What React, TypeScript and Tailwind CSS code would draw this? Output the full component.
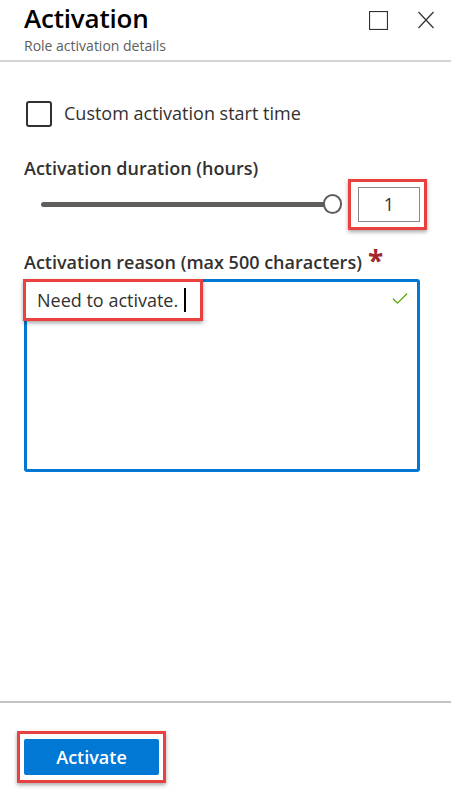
import { Check } from 'lucide-react';

const font = { fontFamily: '"Open Sans", "Noto Sans", sans-serif' };

export default function App() {
  return (
    <div className="w-[451px] h-[793px] bg-white flex flex-col text-[#323130] font-['Open_Sans',sans-serif]">
      {/* Header */}
      <div className="flex justify-between pl-6 pr-2 pt-[1px] h-[62px] border-b-2 border-[#d4d4d4]">
        <div>
          <h1 className="text-[26px] font-semibold leading-[34px] text-black tracking-[-0.2px]">Activation</h1>
          <p className="text-[14px] leading-[18px] text-[#605e5c] mt-[2px]">Role activation details</p>
        </div>
        <div className="flex items-start gap-[30px] pt-[10px] pr-[9px]">
          <svg width="19" height="19" viewBox="0 0 19 19">
            <rect x="0.5" y="0.5" width="18" height="18" fill="none" stroke="#323130" strokeWidth="1.2" />
          </svg>
          <svg width="16" height="18" viewBox="0 0 16 18">
            <path d="M0.5 1 L15.5 17 M15.5 1 L0.5 17" stroke="#323130" strokeWidth="1.2" fill="none" />
          </svg>
        </div>
      </div>

      {/* Body */}
      <div className="flex-1 px-6 pt-[38px]">
        <label className="flex items-center gap-[12px] ml-[2px]">
          <span className="w-[26px] h-[26px] rounded-[3px] border-2 border-[#323130] bg-white" />
          <span className="text-[18px] text-[#323130]">Custom activation start time</span>
        </label>

        <div className="mt-[28px] text-[18px] font-semibold text-[#323130]">Activation duration (hours)</div>
        <div className="flex items-center h-[52px] -mt-[4px]">
          <div className="ml-[17px] w-[301px] h-[5px] rounded-full bg-[#5f5e5d]" />
          <div className="-ml-[3px] w-[20px] h-[20px] rounded-full border-2 border-[#5f5e5d] bg-white" />
          <div className="ml-[6px] border-[3px] border-[#e8413f] shadow-[0_2px_4px_rgba(0,0,0,0.35)] pl-[7px] pr-[4px] py-[5px]">
            <div className="w-[62px] h-[35px] border border-[#8a8886] flex items-center justify-center text-[18px]">1</div>
          </div>
        </div>

        <div className="mt-[19px] flex items-start">
          <span className="text-[18px] font-semibold text-[#323130] leading-[26px]">Activation reason (max 500 characters)</span>
          <span className="ml-[6px] text-[28px] leading-[22px] text-[#a4262c] font-bold">*</span>
        </div>
        <div className="relative mt-[4px] h-[193px] w-[396px] border-[3px] border-[#0078d4] rounded-[3px]">
          <div className="absolute -left-[4px] -top-[3px] w-[180px] h-[42px] border-[3px] border-[#e8413f] shadow-[0_2px_4px_rgba(0,0,0,0.35)] bg-white flex items-center pl-[11px]">
            <span className="text-[18px] text-[#323130]">Need to activate.</span>
            <span className="ml-[6px] w-[2px] h-[24px] bg-black" />
          </div>
          <Check size={20} strokeWidth={1.5} className="absolute right-[7px] top-[7px] text-[#57a300]" />
        </div>
      </div>

      {/* Footer */}
      <div className="h-[92px] border-t-2 border-[#c4c4c4] pl-[17px] pt-[28px]">
        <div className="inline-block border-[3px] border-[#e8413f] shadow-[0_2px_4px_rgba(0,0,0,0.35)] px-[4px] py-[5px]">
          <button className="w-[135px] h-[36px] bg-[#0078d4] rounded-[2px] text-white text-[18px] font-semibold" style={font}>
            Activate
          </button>
        </div>
      </div>
    </div>
  );
}
